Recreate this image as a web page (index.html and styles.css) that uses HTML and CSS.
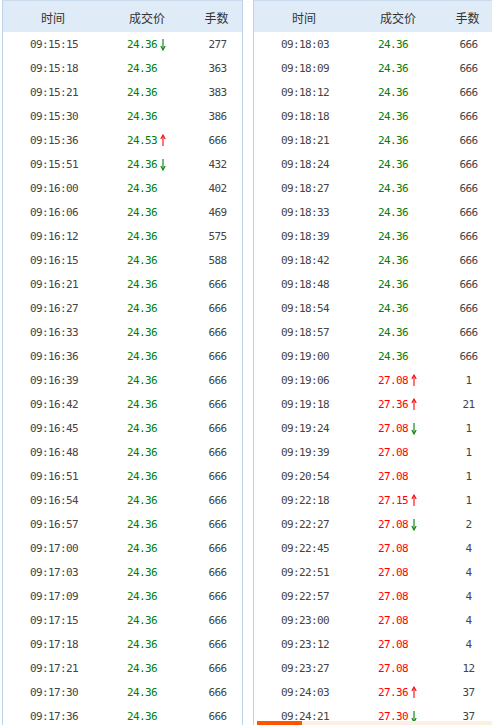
FILE: index.html
```html
<!DOCTYPE html>
<html lang="zh">
<head>
<meta charset="utf-8">
<title>分时成交</title>
<link rel="stylesheet" href="styles.css">
</head>
<body>
<svg class="defs" width="0" height="0" aria-hidden="true">
  <defs>
    <g id="up"><line x1="3" y1="2" x2="3" y2="12" stroke="#f00" stroke-width="1.1"/><path d="M0.8 5 L3 1 L5.2 5" fill="none" stroke="#f00" stroke-width="1.1"/></g>
    <g id="dn"><line x1="3" y1="1" x2="3" y2="11" stroke="#008000" stroke-width="1.1"/><path d="M0.8 8 L3 12 L5.2 8" fill="none" stroke="#008000" stroke-width="1.1"/></g>
  </defs>
</svg>
<div class="board">
  <div class="panel">
    <div class="head"><span>时间</span><span>成交价</span><span>手数</span></div>
    <div class="row"><span class="t">09:15:15</span><span class="p g">24.36<svg class="ar" viewBox="0 0 6 13"><use href="#dn"/></svg></span><span class="n">277</span></div>
    <div class="row"><span class="t">09:15:18</span><span class="p g">24.36</span><span class="n">363</span></div>
    <div class="row"><span class="t">09:15:21</span><span class="p g">24.36</span><span class="n">383</span></div>
    <div class="row"><span class="t">09:15:30</span><span class="p g">24.36</span><span class="n">386</span></div>
    <div class="row"><span class="t">09:15:36</span><span class="p g">24.53<svg class="ar" viewBox="0 0 6 13"><use href="#up"/></svg></span><span class="n">666</span></div>
    <div class="row"><span class="t">09:15:51</span><span class="p g">24.36<svg class="ar" viewBox="0 0 6 13"><use href="#dn"/></svg></span><span class="n">432</span></div>
    <div class="row"><span class="t">09:16:00</span><span class="p g">24.36</span><span class="n">402</span></div>
    <div class="row"><span class="t">09:16:06</span><span class="p g">24.36</span><span class="n">469</span></div>
    <div class="row"><span class="t">09:16:12</span><span class="p g">24.36</span><span class="n">575</span></div>
    <div class="row"><span class="t">09:16:15</span><span class="p g">24.36</span><span class="n">588</span></div>
    <div class="row"><span class="t">09:16:21</span><span class="p g">24.36</span><span class="n">666</span></div>
    <div class="row"><span class="t">09:16:27</span><span class="p g">24.36</span><span class="n">666</span></div>
    <div class="row"><span class="t">09:16:33</span><span class="p g">24.36</span><span class="n">666</span></div>
    <div class="row"><span class="t">09:16:36</span><span class="p g">24.36</span><span class="n">666</span></div>
    <div class="row"><span class="t">09:16:39</span><span class="p g">24.36</span><span class="n">666</span></div>
    <div class="row"><span class="t">09:16:42</span><span class="p g">24.36</span><span class="n">666</span></div>
    <div class="row"><span class="t">09:16:45</span><span class="p g">24.36</span><span class="n">666</span></div>
    <div class="row"><span class="t">09:16:48</span><span class="p g">24.36</span><span class="n">666</span></div>
    <div class="row"><span class="t">09:16:51</span><span class="p g">24.36</span><span class="n">666</span></div>
    <div class="row"><span class="t">09:16:54</span><span class="p g">24.36</span><span class="n">666</span></div>
    <div class="row"><span class="t">09:16:57</span><span class="p g">24.36</span><span class="n">666</span></div>
    <div class="row"><span class="t">09:17:00</span><span class="p g">24.36</span><span class="n">666</span></div>
    <div class="row"><span class="t">09:17:03</span><span class="p g">24.36</span><span class="n">666</span></div>
    <div class="row"><span class="t">09:17:09</span><span class="p g">24.36</span><span class="n">666</span></div>
    <div class="row"><span class="t">09:17:15</span><span class="p g">24.36</span><span class="n">666</span></div>
    <div class="row"><span class="t">09:17:18</span><span class="p g">24.36</span><span class="n">666</span></div>
    <div class="row"><span class="t">09:17:21</span><span class="p g">24.36</span><span class="n">666</span></div>
    <div class="row"><span class="t">09:17:30</span><span class="p g">24.36</span><span class="n">666</span></div>
    <div class="row"><span class="t">09:17:36</span><span class="p g">24.36</span><span class="n">666</span></div>
  </div>
  <div class="panel">
    <div class="head"><span>时间</span><span>成交价</span><span>手数</span></div>
    <div class="row"><span class="t">09:18:03</span><span class="p g">24.36</span><span class="n">666</span></div>
    <div class="row"><span class="t">09:18:09</span><span class="p g">24.36</span><span class="n">666</span></div>
    <div class="row"><span class="t">09:18:12</span><span class="p g">24.36</span><span class="n">666</span></div>
    <div class="row"><span class="t">09:18:18</span><span class="p g">24.36</span><span class="n">666</span></div>
    <div class="row"><span class="t">09:18:21</span><span class="p g">24.36</span><span class="n">666</span></div>
    <div class="row"><span class="t">09:18:24</span><span class="p g">24.36</span><span class="n">666</span></div>
    <div class="row"><span class="t">09:18:27</span><span class="p g">24.36</span><span class="n">666</span></div>
    <div class="row"><span class="t">09:18:33</span><span class="p g">24.36</span><span class="n">666</span></div>
    <div class="row"><span class="t">09:18:39</span><span class="p g">24.36</span><span class="n">666</span></div>
    <div class="row"><span class="t">09:18:42</span><span class="p g">24.36</span><span class="n">666</span></div>
    <div class="row"><span class="t">09:18:48</span><span class="p g">24.36</span><span class="n">666</span></div>
    <div class="row"><span class="t">09:18:54</span><span class="p g">24.36</span><span class="n">666</span></div>
    <div class="row"><span class="t">09:18:57</span><span class="p g">24.36</span><span class="n">666</span></div>
    <div class="row"><span class="t">09:19:00</span><span class="p g">24.36</span><span class="n">666</span></div>
    <div class="row"><span class="t">09:19:06</span><span class="p r">27.08<svg class="ar" viewBox="0 0 6 13"><use href="#up"/></svg></span><span class="n">1</span></div>
    <div class="row"><span class="t">09:19:18</span><span class="p r">27.36<svg class="ar" viewBox="0 0 6 13"><use href="#up"/></svg></span><span class="n">21</span></div>
    <div class="row"><span class="t">09:19:24</span><span class="p r">27.08<svg class="ar" viewBox="0 0 6 13"><use href="#dn"/></svg></span><span class="n">1</span></div>
    <div class="row"><span class="t">09:19:39</span><span class="p r">27.08</span><span class="n">1</span></div>
    <div class="row"><span class="t">09:20:54</span><span class="p r">27.08</span><span class="n">1</span></div>
    <div class="row"><span class="t">09:22:18</span><span class="p r">27.15<svg class="ar" viewBox="0 0 6 13"><use href="#up"/></svg></span><span class="n">1</span></div>
    <div class="row"><span class="t">09:22:27</span><span class="p r">27.08<svg class="ar" viewBox="0 0 6 13"><use href="#dn"/></svg></span><span class="n">2</span></div>
    <div class="row"><span class="t">09:22:45</span><span class="p r">27.08</span><span class="n">4</span></div>
    <div class="row"><span class="t">09:22:51</span><span class="p r">27.08</span><span class="n">4</span></div>
    <div class="row"><span class="t">09:22:57</span><span class="p r">27.08</span><span class="n">4</span></div>
    <div class="row"><span class="t">09:23:00</span><span class="p r">27.08</span><span class="n">4</span></div>
    <div class="row"><span class="t">09:23:12</span><span class="p r">27.08</span><span class="n">4</span></div>
    <div class="row"><span class="t">09:23:27</span><span class="p r">27.08</span><span class="n">12</span></div>
    <div class="row"><span class="t">09:24:03</span><span class="p r">27.36<svg class="ar" viewBox="0 0 6 13"><use href="#up"/></svg></span><span class="n">37</span></div>
    <div class="row"><span class="t">09:24:21</span><span class="p r">27.30<svg class="ar" viewBox="0 0 6 13"><use href="#dn"/></svg></span><span class="n">37</span></div>
  </div>
</div>
<div class="bottombar"><span class="bb-orange"></span><span class="bb-rest"></span></div>
</body>
</html>
```

FILE: styles.css
```css
html, body {
  margin: 0;
  padding: 0;
  background: #fff;
  overflow: hidden;
}
body {
  width: 492px;
  height: 725px;
  font-family: "DejaVu Sans Mono", "Liberation Mono", monospace;
  font-size: 11px;
  color: #333;
}
.defs {
  position: absolute;
  width: 0;
  height: 0;
}
.board {
  display: flex;
  gap: 10px;
  padding-left: 2px;
  width: 492px;
  box-sizing: border-box;
  overflow: hidden;
}
.panel {
  flex: 0 0 241px;
  box-sizing: border-box;
  border-left: 1px solid #bcd2e8;
  border-right: 1px solid #bcd2e8;
  border-top: 1px solid #c9dbec;
}
.panel + .panel {
  flex: 0 0 240px;
  border-right: none;
}
.head, .row {
  display: grid;
  grid-template-columns: 100px 88px 51px;
  align-items: center;
}
.head {
  height: 31px;
  background: #dfebf6;
  font-family: "Noto Sans CJK SC", "Noto Sans", sans-serif;
  font-size: 12px;
  color: #333;
  text-align: center;
}
.head span {
  position: relative;
  top: 1px;
}
.row {
  height: 24px;
}
.t, .n {
  text-align: center;
  letter-spacing: -0.62px;
  color: #444;
}
.t { padding-left: 2px; }
.n { padding-left: 2px; }
.p {
  display: flex;
  align-items: center;
  padding-left: 24px;
  letter-spacing: -0.62px;
}
.g { color: #008000; }
.r { color: #f00; }
.ar {
  width: 6px;
  height: 13px;
  margin-left: 3px;
}
.bottombar {
  position: fixed;
  left: 257px;
  right: 0;
  bottom: 0;
  height: 4px;
  display: flex;
}
.bb-orange {
  width: 45px;
  background: #ff5500;
}
.bb-rest {
  flex: 1;
  background: #fcf0e2;
}
```
